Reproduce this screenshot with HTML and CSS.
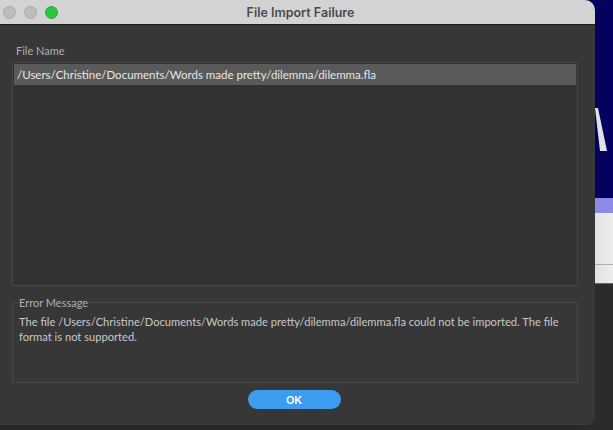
FILE: index.html
```html
<!DOCTYPE html>
<html lang="en">
<head>
<meta charset="utf-8">
<title>File Import Failure</title>
<link rel="stylesheet" href="styles.css">
</head>
<body>
<div class="screen">
  <div class="dialog">
    <div class="titlebar">
      <div class="lights">
        <span class="light"></span>
        <span class="light"></span>
        <span class="light green"></span>
      </div>
      <div class="title">File Import Failure</div>
      <div></div>
    </div>
    <div class="content">
      <div class="label">File Name</div>
      <div class="list">
        <div class="row selected">/Users/Christine/Documents/Words made pretty/dilemma/dilemma.fla</div>
      </div>
      <fieldset class="errors">
        <legend>Error Message</legend>
        <p>The file /Users/Christine/Documents/Words made pretty/dilemma/dilemma.fla could not be imported. The file format is not supported.</p>
      </fieldset>
      <div class="actions">
        <button class="ok">OK</button>
      </div>
    </div>
  </div>
  <div class="backdrop">
    <div class="navy">
      <svg class="glyph" width="28" height="60" viewBox="0 0 28 60"><polygon points="10,10 13,10 22,53 15,53" fill="#e2e2e6"/></svg>
    </div>
    <div class="lavender"></div>
    <div class="sheet"><div class="sheet-line"></div></div>
    <div class="edge"></div>
    <div class="dark"></div>
  </div>
</div>
</body>
</html>
```
FILE: styles.css
```css
html, body {
  margin: 0;
  padding: 0;
  background: #272727;
  width: 613px;
  height: 430px;
  overflow: hidden;
  font-family: Lato, "Liberation Sans", sans-serif;
}
.screen {
  display: flex;
  align-items: flex-start;
}
.dialog {
  position: relative;
  z-index: 1;
  width: 595px;
  height: 424px;
  background: #373737;
  border-radius: 0 10px 9px 0;
  display: flex;
  flex-direction: column;
  flex-shrink: 0;
  box-shadow: 0 1px 0 #3c3c3c;
}
.titlebar {
  height: 24px;
  background: #d3d3d3;
  border-bottom: 1px solid #1c1c1c;
  border-radius: 0 10px 0 0;
  display: grid;
  grid-template-columns: 1fr auto 1fr;
  align-items: center;
}
.lights {
  display: flex;
  gap: 8px;
  padding-left: 3px;
}
.light {
  width: 11px;
  height: 11px;
  border-radius: 50%;
  background: #bdbdbd;
  border: 0.5px solid #ababab;
}
.light.green {
  background: #2ac73f;
  border-color: #22a833;
}
.title {
  font-family: Inter, "Liberation Sans", sans-serif;
  font-weight: 600;
  font-size: 12.5px;
  color: #4a4a4a;
  padding-left: 6px;
}
.content {
  flex: 1;
  display: flex;
  flex-direction: column;
  padding: 0 17px 0 12px;
}
.label {
  font-size: 11px;
  color: #b0b0b0;
  padding: 19px 0 0 4px;
  height: 18px;
}
.list {
  height: 221px;
  border: 1px solid #474747;
  background: #323232;
  padding: 1px 1px 0 1px;
}
.row {
  height: 21px;
  line-height: 21px;
  font-size: 11.5px;
  color: #e6e6e6;
  padding-left: 3px;
  white-space: nowrap;
}
.row.selected {
  background: #5a5a5a;
}
.errors {
  margin: 10px 0 0 0;
  padding: 0 8px 0 6px;
  height: 85px;
  border: 1px solid #464646;
  min-width: 0;
}
.errors legend {
  font-size: 11px;
  color: #b0b0b0;
  padding: 0;
  margin-left: 0;
}
.errors p {
  margin: 5px 0 0 0;
  font-size: 11.15px;
  line-height: 15px;
  color: #c8c8c8;
}
.actions {
  display: flex;
  justify-content: center;
  padding-top: 7px;
  padding-right: 2px;
}
.ok {
  width: 93px;
  height: 19px;
  border: none;
  border-radius: 10px;
  background: #3d9bf0;
  color: #ffffff;
  font-family: Inter, "Liberation Sans", sans-serif;
  font-weight: 600;
  font-size: 11px;
  padding: 0;
}
.backdrop {
  margin-left: -12px;
  width: 30px;
  flex-shrink: 0;
  display: flex;
  flex-direction: column;
}
.navy {
  height: 198px;
  background: #03025e;
  display: flex;
  flex-direction: column;
  justify-content: flex-end;
  padding-bottom: 40px;
  box-sizing: border-box;
}
.glyph {
  display: block;
  margin-left: 2px;
}
.lavender {
  height: 15px;
  background: #8c8ae4;
}
.sheet {
  height: 70px;
  background: linear-gradient(90deg, #d8d8d8, #eeeeee);
  display: flex;
  flex-direction: column;
  justify-content: flex-end;
  padding-bottom: 18px;
  box-sizing: border-box;
}
.sheet-line {
  height: 1px;
  background: #b0b0b0;
}
.edge {
  height: 1px;
  background: #4a6f92;
}
.dark {
  height: 146px;
  background: #2b2b2b;
  border-bottom: 1px solid #303030;
}
```
